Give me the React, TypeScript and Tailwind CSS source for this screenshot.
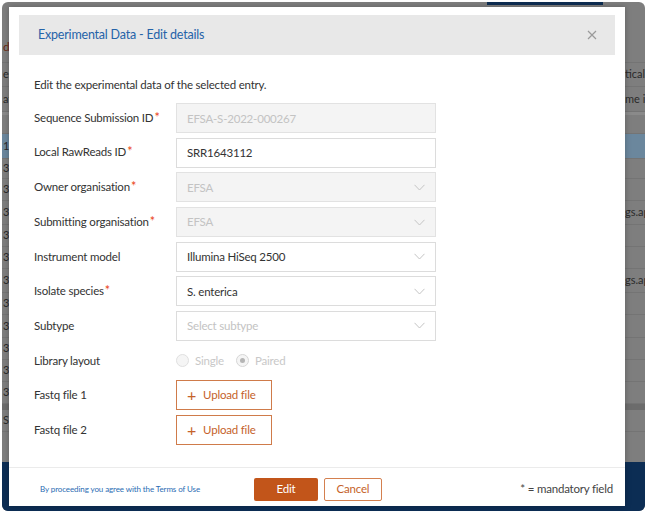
import type { ReactNode } from 'react';

const FONT = 'font-[Lato,"Open_Sans",sans-serif]';
const TXT = 'text-[11.5px] tracking-[-0.2px]';

function Chevron() {
  return (
    <svg width="11" height="7" viewBox="0 0 11 7" className="shrink-0">
      <path d="M0.5 0.8 L5.5 6 L10.5 0.8" fill="none" stroke="#c4c4c4" strokeWidth="1" />
    </svg>
  );
}

function Label({ text, required }: { text: string; required?: boolean }) {
  return (
    <div className={`w-[142px] shrink-0 text-[#333] ${TXT}`}>
      {text}
      {required && <span className="ml-[1px] text-[12.5px] text-[#ea3f12]">*</span>}
    </div>
  );
}

function Row({ label, required, children }: { label: string; required?: boolean; children: ReactNode }) {
  return (
    <div className="flex h-[30px] items-center">
      <Label text={label} required={required} />
      {children}
    </div>
  );
}

function Field({
  value,
  disabled,
  placeholder,
  select,
}: {
  value?: string;
  disabled?: boolean;
  placeholder?: boolean;
  select?: boolean;
}) {
  return (
    <div
      className={`flex h-[30px] w-[260px] items-center justify-between border px-[10px] ${TXT} ${
        disabled ? 'border-[#e2e2e2] bg-[#f4f4f4] text-[#c3c3c3]' : 'border-[#dcdcdc] bg-white'
      } ${placeholder ? 'text-[#c3c3c3]' : disabled ? '' : 'text-[#333]'}`}
    >
      <span>{value}</span>
      {select && <Chevron />}
    </div>
  );
}

function UploadButton() {
  return (
    <button className={`flex h-[30px] w-[96px] items-center gap-[7px] border border-[#cf7b4a] bg-white pl-[10px] text-[#c5622a] ${TXT}`}>
      <span className="text-[16px] leading-none">+</span>
      Upload file
    </button>
  );
}

function BgRow({ left, right, h, tone = 'bg-[#7e7e7e]' }: { left?: string; right?: string; h: string; tone?: string }) {
  return (
    <div className={`flex items-center justify-between border-b border-[#747474] ${h} ${tone} text-[11px] text-[#2a2a2a]`}>
      <span className="pl-[1px]">{left}</span>
      <span className="w-[20px] overflow-hidden whitespace-nowrap">{right}</span>
    </div>
  );
}

export default function App() {
  return (
    <div className={`relative h-[515px] w-[648px] overflow-hidden bg-white ${FONT}`}>
      {/* dimmed page behind the dialog */}
      <div className="absolute left-[2px] top-[2px] flex h-[509px] w-[643px] flex-col overflow-hidden rounded-[6px] bg-[#7e7e7e]">
        <div className="relative h-[61px] border-b border-[#747474]">
          <div className="absolute left-[485px] top-0 h-[3px] w-[116px] bg-[#0d2d52]" />
          <span className="absolute left-[1px] top-[36px] text-[12px] text-[#6b2a14]">d</span>
        </div>
        <BgRow left="eri" right="tical p" h="h-[24px]" />
        <BgRow left="ato" right="me inf" h="h-[25px]" />
        <div className="h-[3px] bg-[#8a8a8a]" />
        <BgRow h="h-[19px]" />
        <BgRow left="16" h="h-[25px]" tone="bg-[#6b879d]" />
        <BgRow left="33" h="h-[20px]" />
        <BgRow left="33" h="h-[22px]" />
        <BgRow left="33" right="gs.ap" h="h-[24px]" />
        <BgRow left="33" h="h-[22px]" />
        <BgRow left="33" h="h-[22px]" />
        <BgRow left="33" right="gs.ap" h="h-[24px]" />
        <BgRow left="33" h="h-[22px]" />
        <BgRow left="33" h="h-[23px]" />
        <BgRow left="33" h="h-[22px]" />
        <BgRow left="33" h="h-[22px]" />
        <BgRow left="33" h="h-[22px]" />
        <div className="h-[6px] bg-[#6c6c6c]" />
        <BgRow left="S" h="h-[22px]" />
        <div className="h-[30px] bg-[#7e7e7e]" />
        <div className="flex-1 bg-[#0c2d54]" />
      </div>

      {/* dialog */}
      <div className="absolute left-[9px] top-[7px] flex h-[499px] w-[616px] flex-col bg-white shadow-[0_0_6px_rgba(0,0,0,0.25)]">
        <div className="mx-[10px] mt-[8px] flex h-[40px] items-center justify-between bg-[#e8e8e8] pl-[19px] pr-[18px]">
          <span className="text-[12.5px] tracking-[-0.2px] text-[#2563a8]">Experimental Data - Edit details</span>
          <svg width="10" height="10" viewBox="0 0 10 10">
            <path d="M1 1 L9 9 M9 1 L1 9" stroke="#9a9a9a" strokeWidth="1.2" />
          </svg>
        </div>

        <div className="flex flex-1 flex-col pl-[25px]">
          <p className={`mt-[21px] text-[#333] ${TXT}`}>Edit the experimental data of the selected entry.</p>

          <div className="mt-[10px] flex flex-col gap-[4.6px]">
            <Row label="Sequence Submission ID" required>
              <Field value="EFSA-S-2022-000267" disabled />
            </Row>
            <Row label="Local RawReads ID" required>
              <Field value="SRR1643112" />
            </Row>
            <Row label="Owner organisation" required>
              <Field value="EFSA" disabled select />
            </Row>
            <Row label="Submitting organisation" required>
              <Field value="EFSA" disabled select />
            </Row>
            <Row label="Instrument model">
              <Field value="Illumina HiSeq 2500" select />
            </Row>
            <Row label="Isolate species" required>
              <Field value="S. enterica" select />
            </Row>
            <Row label="Subtype">
              <Field value="Select subtype" placeholder select />
            </Row>
            <Row label="Library layout">
              <div className={`flex items-center text-[#c8c8c8] ${TXT}`}>
                <span className="h-[13px] w-[13px] rounded-full border border-[#e0e0e0] bg-[#f5f5f5]" />
                <span className="ml-[6px]">Single</span>
                <span className="ml-[12px] flex h-[13px] w-[13px] items-center justify-center rounded-full border border-[#d6d6d6] bg-[#f5f5f5]">
                  <span className="h-[5px] w-[5px] rounded-full bg-[#b5b5b5]" />
                </span>
                <span className="ml-[6px]">Paired</span>
              </div>
            </Row>
            <Row label="Fastq file 1">
              <UploadButton />
            </Row>
            <Row label="Fastq file 2">
              <UploadButton />
            </Row>
          </div>
        </div>

        <div className="flex h-[39px] items-center border-t border-[#ebebeb] pl-[31px] pr-[12px] pt-[4px]">
          <span className="w-[214px] text-[8px] tracking-[-0.1px] text-[#2a6cb3]">By proceeding you agree with the Terms of Use</span>
          <button className={`h-[23px] w-[64px] rounded-[2px] bg-[#c2551a] text-white ${TXT}`}>Edit</button>
          <button className={`ml-[6px] h-[23px] w-[58px] rounded-[2px] border border-[#d4804f] bg-white text-[#c5622a] ${TXT}`}>
            Cancel
          </button>
          <span className={`ml-auto text-[#444] ${TXT}`}>* = mandatory field</span>
        </div>
      </div>
    </div>
  );
}
